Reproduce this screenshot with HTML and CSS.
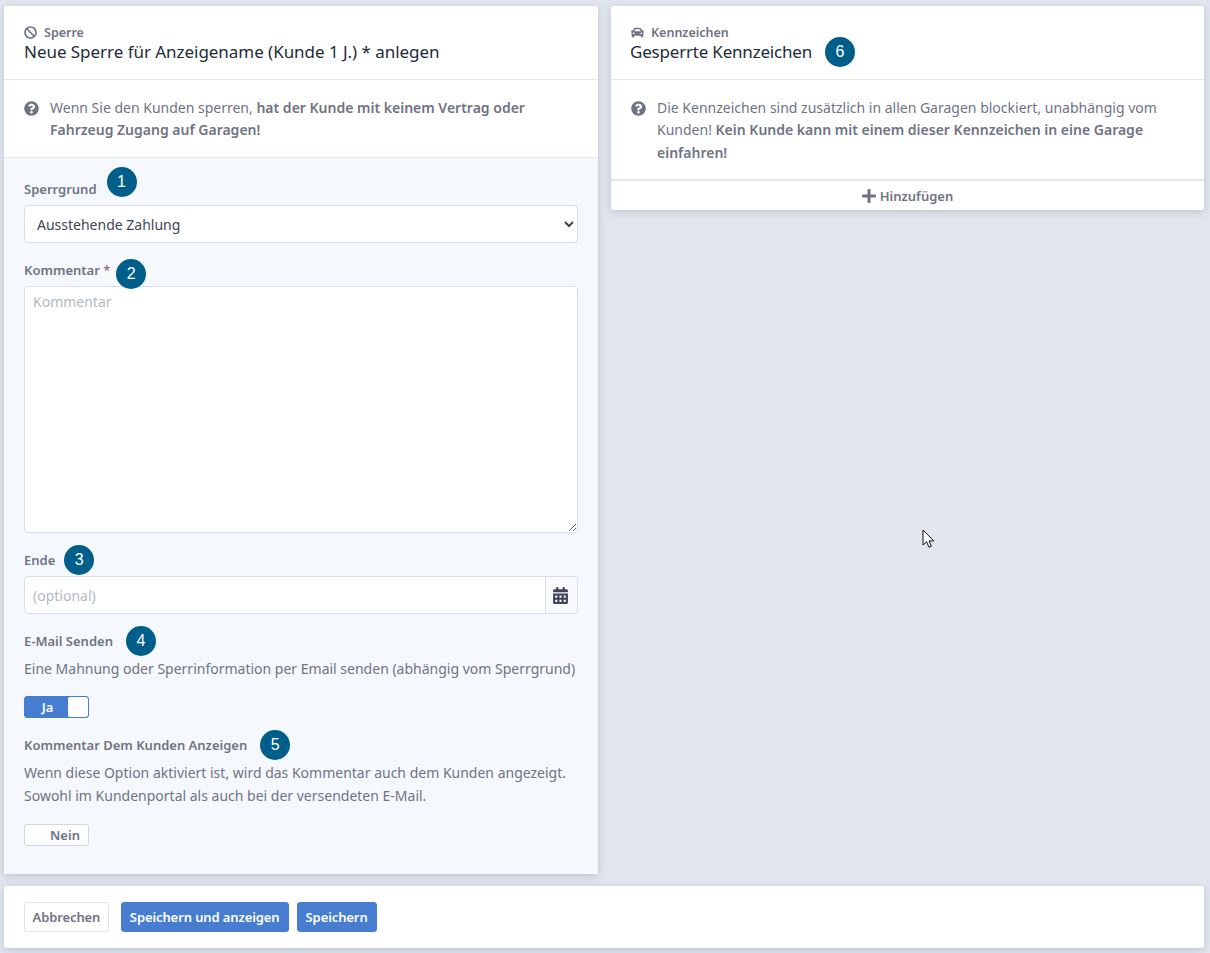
FILE: index.html
```html
<!DOCTYPE html>
<html lang="de">
<head>
    <meta charset="UTF-8">
    <meta name="viewport" content="width=device-width, initial-scale=1.0">
    <title>Neue Sperre anlegen</title>
    <link rel="stylesheet" href="styles.css">
</head>
<body>
    <main class="columns">
        <section class="card">
            <header class="card-head">
                <div class="eyebrow">
                    <svg class="icon" viewBox="0 0 512 512"><path d="M256 8C119.034 8 8 119.033 8 256s111.034 248 248 248 248-111.034 248-248S392.967 8 256 8zm130.108 117.892c65.448 65.448 70 165.481 20.677 235.637L150.47 105.216c70.204-49.356 170.226-44.735 235.638 20.676zM125.892 386.108c-65.448-65.448-70-165.481-20.677-235.637L361.53 406.784c-70.203 49.356-170.226 44.736-235.638-20.676z"/></svg>
                    <span>Sperre</span>
                </div>
                <h2 class="card-title">Neue Sperre für Anzeigename (Kunde 1 J.) * anlegen</h2>
            </header>
            <div class="hint">
                <svg class="icon hint-icon" viewBox="0 0 512 512"><path d="M504 256c0 136.997-111.043 248-248 248S8 392.997 8 256C8 119.083 119.043 8 256 8s248 111.083 248 248zM262.655 90c-54.497 0-89.255 22.957-116.549 63.758-3.536 5.286-2.353 12.415 2.715 16.258l34.699 26.31c5.205 3.947 12.621 3.008 16.665-2.122 17.864-22.658 30.113-35.797 57.303-35.797 20.429 0 45.698 13.148 45.698 32.958 0 14.976-12.363 22.667-32.534 33.976C247.128 238.528 216 254.941 216 296v4c0 6.627 5.373 12 12 12h56c6.627 0 12-5.373 12-12v-1.333c0-28.462 83.186-29.647 83.186-106.667 0-58.002-60.165-102-116.531-102zM256 338c-25.365 0-46 20.635-46 46 0 25.364 20.635 46 46 46s46-20.636 46-46c0-25.365-20.635-46-46-46z"/></svg>
                <p>Wenn Sie den Kunden sperren, <strong>hat der Kunde mit keinem Vertrag oder Fahrzeug Zugang auf Garagen!</strong></p>
            </div>
            <form class="form">
                <div class="field">
                    <label class="label">Sperrgrund <span class="badge badge-up">1</span></label>
                    <select class="control">
                        <option>Ausstehende Zahlung</option>
                    </select>
                </div>
                <div class="field">
                    <label class="label"><span>Kommentar <span class="required">*</span></span> <span class="badge badge-down badge-near">2</span></label>
                    <textarea class="control textarea" placeholder="Kommentar"></textarea>
                </div>
                <div class="field">
                    <label class="label">Ende <span class="badge badge-tight">3</span></label>
                    <div class="input-group">
                        <input class="control group-input" type="text" placeholder="(optional)">
                        <span class="addon">
                            <svg class="icon addon-icon" viewBox="0 0 448 512"><path d="M0 464c0 26.5 21.5 48 48 48h352c26.5 0 48-21.5 48-48V192H0v272zm320-196c0-6.6 5.4-12 12-12h40c6.6 0 12 5.4 12 12v40c0 6.6-5.4 12-12 12h-40c-6.6 0-12-5.4-12-12v-40zm0 128c0-6.6 5.4-12 12-12h40c6.6 0 12 5.4 12 12v40c0 6.6-5.4 12-12 12h-40c-6.6 0-12-5.4-12-12v-40zM192 268c0-6.6 5.4-12 12-12h40c6.6 0 12 5.4 12 12v40c0 6.6-5.4 12-12 12h-40c-6.6 0-12-5.4-12-12v-40zm0 128c0-6.6 5.4-12 12-12h40c6.6 0 12 5.4 12 12v40c0 6.6-5.4 12-12 12h-40c-6.6 0-12-5.4-12-12v-40zM64 268c0-6.6 5.4-12 12-12h40c6.6 0 12 5.4 12 12v40c0 6.6-5.4 12-12 12H76c-6.6 0-12-5.4-12-12v-40zm0 128c0-6.6 5.4-12 12-12h40c6.6 0 12 5.4 12 12v40c0 6.6-5.4 12-12 12H76c-6.6 0-12-5.4-12-12v-40zM400 64h-48V16c0-8.8-7.2-16-16-16h-32c-8.8 0-16 7.2-16 16v48H160V16c0-8.8-7.2-16-16-16h-32c-8.8 0-16 7.2-16 16v48H48C21.5 64 0 85.5 0 112v48h448v-48c0-26.5-21.5-48-48-48z"/></svg>
                        </span>
                    </div>
                </div>
                <div class="field">
                    <label class="label">E-Mail Senden <span class="badge badge-wide">4</span></label>
                    <p class="help">Eine Mahnung oder Sperrinformation per Email senden (abhängig vom Sperrgrund)</p>
                    <div class="toggle toggle-on"><span class="toggle-text">Ja</span><span class="toggle-knob"></span></div>
                </div>
                <div class="field field-last">
                    <label class="label">Kommentar Dem Kunden Anzeigen <span class="badge badge-wide">5</span></label>
                    <p class="help">Wenn diese Option aktiviert ist, wird das Kommentar auch dem Kunden angezeigt. Sowohl im Kundenportal als auch bei der versendeten E-Mail.</p>
                    <div class="toggle toggle-off"><span class="toggle-knob"></span><span class="toggle-text">Nein</span></div>
                </div>
            </form>
        </section>

        <section class="card card-side">
            <header class="card-head">
                <div class="eyebrow">
                    <svg class="icon" viewBox="0 0 512 512"><path d="M499.99 176h-59.87l-16.64-41.6C406.38 91.63 365.57 64 319.5 64h-127c-46.06 0-86.88 27.63-103.99 70.4L71.87 176H12.01C4.2 176-1.53 183.34.37 190.91l6 24C7.7 220.25 12.5 224 18.01 224h20.07C24.65 235.73 16 252.78 16 272v48c0 16.12 6.16 30.67 16 41.93V416c0 17.67 14.33 32 32 32h32c17.67 0 32-14.33 32-32v-32h256v32c0 17.67 14.33 32 32 32h32c17.67 0 32-14.33 32-32v-54.07c9.84-11.25 16-25.8 16-41.93v-48c0-19.22-8.65-36.27-22.07-48H494c5.51 0 10.31-3.75 11.64-9.09l6-24c1.89-7.57-3.84-14.91-11.65-14.91zm-352.06-17.83c7.29-18.22 24.94-30.17 44.57-30.17h127c19.63 0 37.28 11.95 44.57 30.17L384 208H128l19.93-49.83zM96 319.8c-19.2 0-32-12.76-32-31.9S76.8 256 96 256s48 28.71 48 47.85-28.8 15.95-48 15.95zm320 0c-19.2 0-48 3.19-48-15.95S396.8 256 416 256s32 12.76 32 31.9-12.8 31.9-32 31.9z"/></svg>
                    <span>Kennzeichen</span>
                </div>
                <h2 class="card-title card-title-badge">Gesperrte Kennzeichen <span class="badge">6</span></h2>
            </header>
            <div class="hint hint-side">
                <svg class="icon hint-icon" viewBox="0 0 512 512"><path d="M504 256c0 136.997-111.043 248-248 248S8 392.997 8 256C8 119.083 119.043 8 256 8s248 111.083 248 248zM262.655 90c-54.497 0-89.255 22.957-116.549 63.758-3.536 5.286-2.353 12.415 2.715 16.258l34.699 26.31c5.205 3.947 12.621 3.008 16.665-2.122 17.864-22.658 30.113-35.797 57.303-35.797 20.429 0 45.698 13.148 45.698 32.958 0 14.976-12.363 22.667-32.534 33.976C247.128 238.528 216 254.941 216 296v4c0 6.627 5.373 12 12 12h56c6.627 0 12-5.373 12-12v-1.333c0-28.462 83.186-29.647 83.186-106.667 0-58.002-60.165-102-116.531-102zM256 338c-25.365 0-46 20.635-46 46 0 25.364 20.635 46 46 46s46-20.636 46-46c0-25.365-20.635-46-46-46z"/></svg>
                <p>Die Kennzeichen sind zusätzlich in allen Garagen blockiert, unabhängig vom Kunden! <strong>Kein Kunde kann mit einem dieser Kennzeichen in eine Garage einfahren!</strong></p>
            </div>
            <button class="add-row" type="button">
                <svg class="icon add-icon" viewBox="0 0 448 512"><path d="M416 208H272V64c0-17.67-14.33-32-32-32h-32c-17.67 0-32 14.33-32 32v144H32c-17.67 0-32 14.33-32 32v32c0 17.67 14.33 32 32 32h144v144c0 17.67 14.33 32 32 32h32c17.67 0 32-14.33 32-32V304h144c17.67 0 32-14.33 32-32v-32c0-17.67-14.33-32-32-32z"/></svg>
                Hinzufügen
            </button>
        </section>
    </main>

    <footer class="actions">
        <button class="btn btn-plain" type="button">Abbrechen</button>
        <button class="btn btn-primary" type="button">Speichern und anzeigen</button>
        <button class="btn btn-primary" type="button">Speichern</button>
    </footer>

    <!-- mouse pointer from the screenshot -->
    <svg class="cursor" viewBox="0 0 14 20" width="14" height="20"><path d="M1 1v15l3.6-3.2 2.4 5.4 2.4-1-2.4-5.3h4.8z" fill="#fff" stroke="#111" stroke-width="1"/></svg>
</body>
</html>
```

FILE: styles.css
```css
* {
    box-sizing: border-box;
}

body {
    margin: 0;
    height: 953px;
    padding: 6px 6px 0 4px;
    overflow: hidden;
    position: relative;
    background-color: #e2e6ee;
    color: #6f7384;
    font-family: 'Noto Sans', 'Open Sans', sans-serif;
    font-size: 14px;
    line-height: 22.5px;
}

.columns {
    display: grid;
    grid-template-columns: 594px 593px;
    column-gap: 13px;
    align-items: start;
}

.card {
    background: #fff;
    border-radius: 3px 3px 0 0;
    box-shadow: 0 2px 8px rgba(80, 90, 120, 0.25);
}

.card-side {
    border-radius: 3px;
}

.card-head {
    height: 74px;
    padding: 19px 20px 0;
    border-bottom: 1px solid #e3e6ec;
}

.eyebrow {
    display: flex;
    align-items: center;
    gap: 7px;
    height: 15px;
    font-size: 12.5px;
    font-weight: 600;
    line-height: 15px;
}

.icon {
    width: 13px;
    height: 13px;
    fill: currentColor;
    flex: none;
}

.card-title {
    margin: 0;
    height: 24px;
    color: #222b3a;
    font-size: 17px;
    font-weight: 400;
    line-height: 24px;
    letter-spacing: -0.04px;
}

.card-title-badge {
    display: flex;
    align-items: center;
    margin-left: -1px;
    letter-spacing: -0.2px;
}

.hint {
    display: flex;
    gap: 11px;
    padding: 16.5px 20px 15.5px;
    border-bottom: 1px solid #e3e6ec;
}

.hint p {
    margin: 0;
}

.hint strong {
    font-weight: 600;
}

.hint-icon {
    width: 15px;
    height: 15px;
    margin-top: 4px;
}

.hint-side {
    padding-bottom: 15px;
    border-bottom: 0;
}

.form {
    padding: 21px 20px 28px;
    background: #f5f9fd;
}

.field {
    margin-bottom: 17px;
}

.field-last {
    margin-bottom: 0;
}

.label {
    display: flex;
    align-items: center;
    height: 20px;
    margin-bottom: 6px;
    font-size: 13px;
    font-weight: 600;
    line-height: 20px;
}

.required {
    color: #94707e;
}

.badge {
    display: inline-flex;
    align-items: center;
    justify-content: center;
    flex: none;
    width: 30px;
    height: 30px;
    margin-left: 10px;
    border-radius: 50%;
    background: #005f8a;
    color: #fff;
    font-family: 'Liberation Sans', sans-serif;
    font-size: 16px;
    font-weight: 400;
    letter-spacing: 0;
}

.badge-up {
    transform: translateY(-7px);
}

.badge-down {
    transform: translateY(4px);
}

.badge-near {
    margin-left: 6px;
}

.badge-tight {
    margin-left: 9px;
}

.badge-wide {
    margin-left: 13px;
}

.card-title-badge .badge {
    margin-left: 13px;
}

.control {
    display: block;
    width: 100%;
    height: 38px;
    padding: 0 8px;
    border: 1px solid #d9deea;
    border-radius: 4px;
    background: #fff;
    color: #444c5c;
    font: inherit;
    outline: none;
}

select.control {
    color: #3f4656;
}

.control::placeholder {
    color: #b4b8c4;
    opacity: 1;
}

.textarea {
    height: 247px;
    padding: 4px 8px;
}

.input-group {
    display: flex;
}

.group-input {
    flex: 1;
    border-radius: 4px 0 0 4px;
}

.addon {
    display: flex;
    align-items: center;
    justify-content: center;
    width: 32px;
    height: 38px;
    padding-right: 2px;
    border: 1px solid #d9deea;
    border-left: 0;
    border-radius: 0 4px 4px 0;
    background: #fafafc;
    color: #3f4656;
}

.addon-icon {
    width: 15px;
    height: 17px;
}

.help {
    margin: 7px 0 15.5px;
}

.field-last .help {
    margin-bottom: 17px;
}

.toggle {
    display: flex;
    align-items: stretch;
    width: 65px;
    height: 22px;
    border: 1px solid #d3d7e0;
    border-radius: 3px;
    overflow: hidden;
    background: #fff;
    font-size: 13px;
    font-weight: 600;
    line-height: 20px;
}

.toggle-on {
    border-color: #477dd1;
    background: #477dd1;
    color: #fff;
}

.toggle-on .toggle-text {
    padding-left: 2px;
}

.toggle-off .toggle-text {
    padding-right: 3px;
}

.toggle-text {
    flex: 1;
    text-align: center;
}

.toggle-knob {
    width: 20px;
    background: #fff;
    border-radius: 2px;
}

.add-row {
    display: flex;
    align-items: center;
    justify-content: center;
    gap: 4px;
    width: 100%;
    height: 31px;
    padding-top: 2px;
    border: 0;
    border-top: 2px solid #e3e6ec;
    border-radius: 0 0 3px 3px;
    background: #fff;
    color: #6f7384;
    font: inherit;
    font-size: 13px;
    font-weight: 600;
}

.add-icon {
    width: 14px;
    height: 16px;
}

.actions {
    display: flex;
    gap: 8px;
    height: 62px;
    margin-top: 12px;
    padding: 16px 20px;
    background: #fff;
    border-radius: 3px;
    box-shadow: 0 2px 8px rgba(80, 90, 120, 0.25);
}

.btn {
    height: 30px;
    padding: 0 8px;
    border: 1px solid #477dd1;
    border-radius: 3px;
    font: inherit;
    font-size: 13px;
    font-weight: 600;
    line-height: 28px;
    letter-spacing: -0.1px;
}

.btn-plain {
    margin-right: 4px;
    padding: 0 7.5px;
    border-color: #e1e4ea;
    background: #fff;
    color: #6f7384;
}

.btn-primary {
    background: #477dd1;
    color: #fff;
}

.cursor {
    position: absolute;
    left: 922px;
    top: 529px;
}
```
